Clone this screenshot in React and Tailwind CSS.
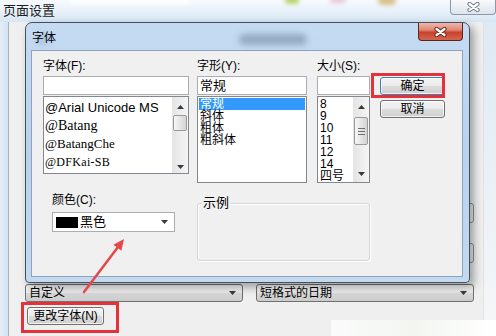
import React from "react";

function Tri({ up }) {
  return (
    <svg width="7" height="4" viewBox="0 0 7 4" className="block">
      <polygon points={up ? "3.5,0 7,4 0,4" : "0,0 7,0 3.5,4"} fill="#3a3a3a" />
    </svg>
  );
}

function XGlyph({ outline }) {
  return (
    <svg width="13" height="10" viewBox="0 0 13 10" className="block">
      <path d="M2.5 2 L10.5 8 M10.5 2 L2.5 8" stroke={outline} strokeWidth="4.2" strokeLinecap="round" />
      <path d="M2.5 2 L10.5 8 M10.5 2 L2.5 8" stroke="#ffffff" strokeWidth="2.3" strokeLinecap="round" />
    </svg>
  );
}

function Thumb({ cls, grip }) {
  return (
    <div
      className={`mx-[1px] rounded-[2px] border border-[#9a9a9a] bg-gradient-to-r from-[#f7f7f7] to-[#d4d4d4] flex flex-col items-center justify-center gap-[2px] ${cls}`}
    >
      {grip && (
        <>
          <div className="w-[7px] h-[1px] bg-[#6f6f6f]" />
          <div className="w-[7px] h-[1px] bg-[#6f6f6f]" />
          <div className="w-[7px] h-[1px] bg-[#6f6f6f]" />
        </>
      )}
    </div>
  );
}

function ScrollBar({ thumbCls, grip, downCls }) {
  return (
    <div className="w-[16px] flex flex-col bg-gradient-to-r from-[#e4e4e4] to-[#f5f5f5]">
      <div className="h-[17px] flex justify-center pt-[8px]">
        <Tri up />
      </div>
      <Thumb cls={thumbCls} grip={grip} />
      <div className="flex-1" />
      <div className={`h-[17px] flex justify-center ${downCls}`}>
        <Tri />
      </div>
    </div>
  );
}

function Label({ children }) {
  return <div className="h-[15px] leading-[15px] text-[12px] whitespace-nowrap">{children}</div>;
}

function Input({ children }) {
  return (
    <div className="mt-[2px] h-[19px] border border-[#abadb3] bg-white pl-[2px] text-[13px] leading-[17px]">
      {children}
    </div>
  );
}

function WinButton({ children, def }) {
  return (
    <div
      className={`h-[18px] w-full rounded-[3px] border ${
        def ? "border-[#3c7fb1]" : "border-[#707070]"
      } bg-[linear-gradient(to_bottom,#f4f4f4_0%,#ebebeb_48%,#dcdcdc_52%,#cfcfcf_100%)] shadow-[inset_0_0_0_1px_rgba(255,255,255,0.7)] flex items-center justify-center text-[12px] leading-[16px]`}
    >
      {children}
    </div>
  );
}

function BgCombo({ children }) {
  return (
    <div className="w-[218px] h-[18px] rounded-[3px] border border-[#707070] bg-[linear-gradient(to_bottom,#f4f4f4_0%,#e9e9e9_48%,#d8d8d8_52%,#cbcbcb_100%)] flex items-center justify-between pl-[3px] pr-[6px] text-[12px] leading-[16px]">
      <span>{children}</span>
      <Tri />
    </div>
  );
}

export default function App() {
  return (
    <div className="relative w-[496px] h-[336px] overflow-hidden bg-[#efefef] font-['Liberation_Sans','Noto_Sans_CJK_SC',sans-serif] text-black">
      {/* outer title bar */}
      <div className="relative flex h-[22px] justify-between bg-gradient-to-b from-[#f6fafe] via-[#e8f1fa] to-[#d6e6f5]">
        <div className="absolute left-[285px] top-[-4px] w-[14px] h-[8px] rounded-full bg-[#b9d36a] blur-[2px]" />
        <div className="absolute left-[330px] top-[-4px] w-[16px] h-[7px] rounded-full bg-[#e9c6d4] blur-[2px]" />
        <div className="absolute left-[378px] top-[-4px] w-[18px] h-[9px] rounded-full bg-[#d8c08a] blur-[2px]" />
        <div className="absolute left-[70px] top-[-2px] w-[120px] h-[6px] rounded-full bg-white blur-[2px]" />
        <div className="relative pl-[3px] pt-[2px] text-[13px] leading-[17px] text-[#1c1c1c]">页面设置</div>
        <div className="relative w-[46px] h-[15px] rounded-b-[4px] border-l border-r border-b border-[#8e98a4] bg-gradient-to-b from-[#f8fafc] to-[#dde4ec] flex items-center justify-center">
          <XGlyph outline="#6f7a86" />
        </div>
      </div>

      {/* outer body */}
      <div className="flex h-[314px]">
        <div className="w-[9px] bg-gradient-to-r from-[#e4eef8] to-[#d3e2f1] border-r border-[#a9b2bc]" />
        <div className="w-[474px] flex flex-col bg-[#efefef]">
          <div className="h-[262px] flex flex-col items-end pt-[181px] gap-[20px] pr-[9px]">
            <div className="w-[40px] h-[20px] border border-[#8f8f8f] rounded-[3px]" />
            <div className="w-[40px] h-[20px] border border-[#8f8f8f] rounded-[3px]" />
          </div>
          <div className="flex gap-[13px] pl-[16px]">
            <BgCombo>自定义</BgCombo>
            <BgCombo>短格式的日期</BgCombo>
          </div>
          <div className="pl-[18px] mt-[5px]">
            <div className="w-[77px]">
              <WinButton>更改字体(N)</WinButton>
            </div>
          </div>
        </div>
        <div className="w-[13px] bg-gradient-to-b from-[#dfe9f3] to-[#f6f7f8] border-l border-[#e2e2e2]" />
      </div>

      {/* bottom-right bright patch */}
      <div className="absolute left-[331px] top-[320px] w-[165px] h-[16px] bg-gradient-to-r from-[#fbfbfb] via-[#f2f6f0] to-[#ffffff]" />

      {/* inner dialog 字体 */}
      <div className="absolute left-[25px] top-[22px] w-[445px] h-[261px] rounded-t-[7px] rounded-b-[4px] border border-[#44505e] bg-gradient-to-b from-[#c4dbf2] via-[#b9d3ed] to-[#c3d9ef] shadow-[4px_4px_8px_rgba(0,0,0,0.35)] flex flex-col">
        <div className="relative h-[27px] flex justify-between">
          <div className="absolute left-[213px] top-[11px] w-[68px] h-[11px] rounded-full bg-[#50627a] opacity-40 blur-[3px]" />
          <div className="absolute left-[10px] top-[10px] w-[14px] h-[12px] rounded-full bg-[#8fa6bf] opacity-40 blur-[3px]" />
          <div className="relative pl-[6px] pt-[8px] text-[12px] leading-[14px]">字体</div>
          <div className="relative mr-[6px] w-[45px] h-[18px] rounded-b-[4px] border-l border-r border-b border-[#5e2418] bg-[linear-gradient(to_bottom,#ecb8ab_0%,#e08a78_40%,#c8432c_55%,#d56650_100%)] flex items-center justify-center">
            <XGlyph outline="#6a2618" />
          </div>
        </div>

        <div className="ml-[5px] w-[432px] h-[227px] border border-[#8ea4bb] bg-[#f0f0f0] pl-[11px] pt-[8px] flex flex-col">
          {/* row 1 */}
          <div className="flex">
            {/* font column */}
            <div className="w-[146px] flex flex-col">
              <Label>字体(F):</Label>
              <Input>{""}</Input>
              <div className="mt-[1px] h-[78px] border border-[#828790] bg-white flex">
                <div className="flex-1 pt-[2px] pl-[1px] overflow-hidden whitespace-nowrap">
                  <div className="h-[18px] leading-[18px] text-[13px] font-['Liberation_Sans',sans-serif]">@Arial Unicode MS</div>
                  <div className="h-[18px] leading-[18px] text-[14px] font-['Liberation_Serif',serif]">@Batang</div>
                  <div className="h-[18px] leading-[18px] text-[13px] font-['Liberation_Serif',serif]">@BatangChe</div>
                  <div className="h-[18px] leading-[18px] text-[12px] font-['Liberation_Serif',serif] tracking-[0.3px]">@DFKai-SB</div>
                </div>
                <ScrollBar thumbCls="mt-[1px] h-[16px]" downCls="pt-[9px]" />
              </div>
            </div>

            {/* style column */}
            <div className="ml-[8px] w-[110px] flex flex-col">
              <Label>字形(Y):</Label>
              <Input>常规</Input>
              <div className="mt-[1px] h-[87px] border border-[#828790] bg-white pt-[1px] px-[1px] text-[12px]">
                <div className="h-[12px] leading-[12px] bg-[#3399ff] text-white pl-[1px]">常规</div>
                <div className="h-[12px] leading-[12px] pl-[1px]">斜体</div>
                <div className="h-[12px] leading-[12px] pl-[1px]">粗体</div>
                <div className="h-[12px] leading-[12px] pl-[1px]">粗斜体</div>
              </div>
            </div>

            {/* size column */}
            <div className="ml-[10px] w-[53px] flex flex-col">
              <Label>大小(S):</Label>
              <Input>{""}</Input>
              <div className="mt-[1px] h-[87px] border border-[#828790] bg-white flex">
                <div className="flex-1 pt-[1px] pl-[2px] text-[12px] overflow-hidden">
                  <div className="h-[12px] leading-[12px]">8</div>
                  <div className="h-[12px] leading-[12px]">9</div>
                  <div className="h-[12px] leading-[12px]">10</div>
                  <div className="h-[12px] leading-[12px]">11</div>
                  <div className="h-[12px] leading-[12px]">12</div>
                  <div className="h-[12px] leading-[12px]">14</div>
                  <div className="h-[12px] leading-[12px]">四号</div>
                </div>
                <ScrollBar thumbCls="mt-[3px] h-[28px]" grip downCls="pt-[7px]" />
              </div>
            </div>

            {/* buttons */}
            <div className="ml-[10px] w-[65px] pt-[18px] flex flex-col gap-[5px]">
              <WinButton def>确定</WinButton>
              <WinButton>取消</WinButton>
            </div>
          </div>

          {/* row 2 */}
          <div className="mt-[10px] flex">
            <div className="w-[146px] pl-[9px] flex flex-col">
              <Label>颜色(C):</Label>
              <div className="mt-[4px] w-[123px] h-[20px] border border-[#abadb3] bg-white flex items-center pl-[3px] pr-[6px]">
                <div className="w-[22px] h-[11px] bg-black" />
                <span className="ml-[2px] text-[13px] leading-[16px]">黑色</span>
                <div className="flex-1" />
                <Tri />
              </div>
            </div>
            <div className="relative ml-[8px] mt-[10px] w-[173px] h-[58px] border border-[#d5d5d5] rounded-[3px] shadow-[inset_1px_1px_0_#ffffff,1px_1px_0_#ffffff]">
              <div className="absolute left-[4px] top-[-8px] px-[1px] bg-[#f0f0f0] text-[13px] leading-[14px]">示例</div>
            </div>
          </div>
        </div>
      </div>

      {/* red highlight boxes */}
      <div className="absolute left-[371px] top-[73px] w-[74px] h-[25px] border-[3px] border-[#e5323a]" />
      <div className="absolute left-[21px] top-[302px] w-[98px] h-[31px] border-[3px] border-[#e5323a]" />

      {/* red arrow */}
      <svg className="absolute left-0 top-0" width="496" height="336" viewBox="0 0 496 336">
        <line x1="84" y1="292" x2="118" y2="247" stroke="#e8474a" strokeWidth="2.5" strokeLinecap="round" />
        <polygon points="124,239 121.4,250.8 113.4,244.8" fill="#e8474a" />
      </svg>
    </div>
  );
}
